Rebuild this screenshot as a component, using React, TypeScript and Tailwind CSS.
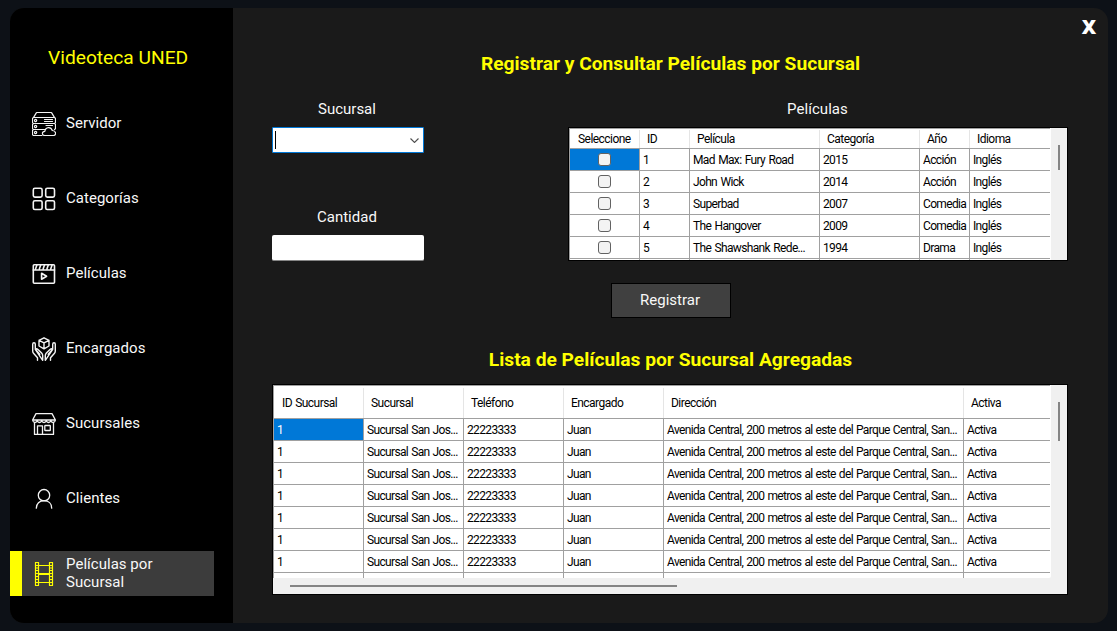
import React from "react";

const strokeProps = {
  fill: "none",
  stroke: "currentColor",
  strokeLinecap: "round" as const,
  strokeLinejoin: "round" as const,
};

function ServerIcon() {
  return (
    <svg width="24" height="24" viewBox="0 0 24 24" strokeWidth="1.2" {...strokeProps}>
      <path d="M1.6 5.4 4.3.9Q4.6.5 5.2.5H18.8Q19.4.5 19.7.9L22.4 5.4" />
      <path d="M10 23.5H2Q.5 23.5.5 22V19Q.5 17.5 2 17.5H12.5M2 17.5Q.5 17.5.5 16V13Q.5 11.5 2 11.5H22Q23.5 11.5 23.5 13V16Q23.5 17 22.5 17.5M2 11.5Q.5 11.5.5 10V7Q.5 5.5 2 5.5H22Q23.5 5.5 23.5 7V10Q23.5 11.5 22 11.5" />
      <circle cx="3.6" cy="8.5" r="1.1" />
      <circle cx="3.6" cy="14.5" r="1.1" />
      <circle cx="3.6" cy="20.5" r="1.1" />
      <path d="M12.5 7.5H20.5M12.5 9.5H20.5M14 13.5H20.5" />
      <path d="M12.8 23.5C9.5 23.5 9.7 19.5 12.8 19.3C13.5 14.7 19 14.3 20.3 18.5C24.5 18.7 24.5 23.5 21.4 23.5Z" />
    </svg>
  );
}

function GridIcon() {
  return (
    <svg width="24" height="24" viewBox="0 0 24 24" strokeWidth="1.6" {...strokeProps}>
      <rect x="1.3" y="1.3" width="8.8" height="8.8" rx="1.6" />
      <rect x="13.7" y="1.3" width="8.8" height="8.8" rx="1.6" />
      <rect x="1.3" y="13.7" width="8.8" height="8.8" rx="1.6" />
      <rect x="13.7" y="13.7" width="8.8" height="8.8" rx="1.6" />
    </svg>
  );
}

function MovieIcon() {
  return (
    <svg width="24" height="24" viewBox="0 0 24 24" strokeWidth="1.6" {...strokeProps}>
      <rect x="1.3" y="2.8" width="21.2" height="18.4" rx="1" />
      <path d="M1.3 8H22.5M4.8 3.2 3.6 6.8M8.6 3.2 7.4 6.8M12.4 3.2 11.2 6.8M16.2 3.2 15 6.8M20 3.2 18.8 6.8" />
      <path d="M9.6 11.3V17.3L14.6 14.3Z" />
    </svg>
  );
}

function HandsIcon() {
  return (
    <svg width="24" height="24" viewBox="0 0 24 24" strokeWidth="1.4" {...strokeProps}>
      <path d="M12 .8 17 3.3V9L12 11.9 7 9V3.3ZM7 3.3 12 5.9 17 3.3M12 5.9V11.9" />
      <path d="M5.5 23.3V20.7L1.5 16.2Q.7 15.3.7 14V7.2Q.7 5.7 2 5.7 3.3 5.7 3.3 7.2V12.3L7.8 17.3M3.3 12.3Q4.5 11.2 6 12.5L9.6 16Q10.7 17.2 10.7 18.8V23.3Z" />
      <path d="M18.5 23.3V20.7L22.5 16.2Q23.3 15.3 23.3 14V7.2Q23.3 5.7 22 5.7 20.7 5.7 20.7 7.2V12.3L16.2 17.3M20.7 12.3Q19.5 11.2 18 12.5L14.4 16Q13.3 17.2 13.3 18.8V23.3Z" />
    </svg>
  );
}

function StoreIcon() {
  return (
    <svg width="24" height="24" viewBox="0 0 24 24" strokeWidth="1.3" {...strokeProps}>
      <path d="M4 1.6H20L23.4 8H.6ZM.6 8Q1 10.5 2.8 10.5 4.7 10.5 5.2 8.6 5.8 10.5 7.5 10.5 9.2 10.5 9.7 8.6 10.3 10.5 12 10.5 13.7 10.5 14.3 8.6 14.8 10.5 16.5 10.5 18.2 10.5 18.8 8.6 19.3 10.5 21.2 10.5 23 10.5 23.4 8" />
      <path d="M2.5 10.5V22.4H21.5V10.5M5.5 22.4V13.8H10.5V22.4" />
      <rect x="12.8" y="13.5" width="5.5" height="5" rx=".6" />
    </svg>
  );
}

function UserIcon() {
  return (
    <svg width="24" height="24" viewBox="0 0 24 24" strokeWidth="1.3" {...strokeProps}>
      <circle cx="12" cy="8.2" r="5.7" />
      <path d="M4.3 21.2C4.3 16.5 7.5 13.7 12 13.7S19.7 16.5 19.7 21.2" />
    </svg>
  );
}

function FilmIcon() {
  return (
    <svg width="24" height="24" viewBox="0 0 24 24" strokeWidth="1.2" {...strokeProps}>
      <path d="M3.5.5H6.5V23.5H3.5ZM17.5.5H20.5V23.5H17.5Z" />
      <path d="M6.5 3.5H17.5M6.5 11.6H17.5M6.5 12.4H17.5M6.5 20.5H17.5" />
      <path
        strokeLinecap="butt"
        d="M3.5 3.5H6.5M3.5 6H6.5M3.5 8.5H6.5M3.5 11.5H6.5M3.5 14.5H6.5M3.5 17.5H6.5M3.5 20.5H6.5M17.5 3.5H20.5M17.5 6H20.5M17.5 8.5H20.5M17.5 11.5H20.5M17.5 14.5H20.5M17.5 17.5H20.5M17.5 20.5H20.5"
      />
    </svg>
  );
}

const menu = [
  { label: "Servidor", icon: <ServerIcon /> },
  { label: "Categorías", icon: <GridIcon /> },
  { label: "Películas", icon: <MovieIcon /> },
  { label: "Encargados", icon: <HandsIcon /> },
  { label: "Sucursales", icon: <StoreIcon /> },
  { label: "Clientes", icon: <UserIcon /> },
  { label: "Películas por Sucursal", icon: <FilmIcon />, active: true },
];

function Sidebar() {
  return (
    <nav className="flex w-[223px] shrink-0 flex-col bg-black">
      <h1 className="mt-[37px] h-14 pl-[38px] text-[19.2px] leading-[26px] whitespace-nowrap text-[#ffff00]">
        Videoteca UNED
      </h1>
      <ul className="flex flex-col gap-[30px]">
        {menu.map((item) => (
          <li
            key={item.label}
            className={`flex h-[45px] w-[204px] items-center border-l-12 ${
              item.active ? "border-[#ffff00] bg-[#3c3c3c] text-[#ffff00]" : "border-black text-[#f4f4f4]"
            }`}
          >
            <span className="ml-2.5">{item.icon}</span>
            <span className="ml-2.5 w-[110px] pb-0.5 text-[15px] leading-[18px] tracking-[0.03px] text-[#f8f8f8]">
              {item.label}
            </span>
          </li>
        ))}
      </ul>
    </nav>
  );
}

const movieCols = [
  { name: "Seleccione", width: "w-[70px]" },
  { name: "ID", width: "w-[50px]" },
  { name: "Película", width: "w-[130px]" },
  { name: "Categoría", width: "w-[100px]" },
  { name: "Año", width: "w-[50px]" },
  { name: "Idioma", width: "w-[80px]" },
];

const movies = [
  ["1", "Mad Max: Fury Road", "2015", "Acción", "Inglés"],
  ["2", "John Wick", "2014", "Acción", "Inglés"],
  ["3", "Superbad", "2007", "Comedia", "Inglés"],
  ["4", "The Hangover", "2009", "Comedia", "Inglés"],
  ["5", "The Shawshank Rede...", "1994", "Drama", "Inglés"],
  ["", "", "", "", ""],
];

const branchCols = [
  { name: "ID Sucursal", width: "w-[90px]" },
  { name: "Sucursal", width: "w-[100px]" },
  { name: "Teléfono", width: "w-[100px]" },
  { name: "Encargado", width: "w-[100px]" },
  { name: "Dirección", width: "w-[300px]" },
  { name: "Activa", width: "w-[86px]" },
];

const branchRow = [
  "1",
  "Sucursal San Jos...",
  "22223333",
  "Juan",
  "Avenida Central, 200 metros al este del Parque Central, San...",
  "Activa",
];
const branches = [...Array.from({ length: 7 }, () => branchRow), ["", "", "", "", "", ""]];

type Col = { name: string; width: string };

function HeaderRow({ cols, height }: { cols: Col[]; height: string }) {
  return (
    <div
      className={`mr-px flex shrink-0 border-t border-b border-t-[#a0a0a0] border-b-[#a0a0a0] leading-[19px] tracking-[-0.54px] ${height}`}
    >
      {cols.map((c, i) => (
        <div
          key={c.name}
          className={`flex shrink-0 items-center border-[#e5e5e5] ${i === 0 ? "pl-2" : "pl-[7px]"} ${c.width} ${
            i < cols.length - 1 ? "border-r" : ""
          }`}
        >
          {c.name}
        </div>
      ))}
    </div>
  );
}

function Row({ cols, cells, selected }: { cols: Col[]; cells: React.ReactNode[]; selected: boolean }) {
  return (
    <div className="mr-px flex h-[22px] shrink-0 border-b border-[#a0a0a0] leading-5">
      {cells.map((cell, i) => (
        <div
          key={i}
          className={`flex shrink-0 items-center overflow-hidden border-[#a0a0a0] pt-px pl-[3px] whitespace-nowrap ${
            cols[i].width
          } ${i < cols.length - 1 ? "border-r" : ""} ${selected && i === 0 ? "bg-[#0078d7] text-white" : ""}`}
        >
          {cell}
        </div>
      ))}
    </div>
  );
}

function MoviesTable() {
  return (
    <div className="flex h-[134px] w-[500px] border border-black bg-[#f0f0f0] text-[12px] tracking-[-0.65px] text-black [word-spacing:1px]">
      <div className="flex w-[482px] flex-col overflow-hidden border-l border-[#a0a0a0] bg-white">
        <HeaderRow cols={movieCols} height="h-[21px] pt-px" />
        {movies.map((m, i) => (
          <Row
            key={i}
            cols={movieCols}
            selected={i === 0}
            cells={[
              m[0] ? (
                <span
                  key="box"
                  className="mb-px ml-[25px] size-[13px] rounded-[3px] border border-[#626262] bg-[#f3f3f3]"
                />
              ) : null,
              ...m,
            ]}
          />
        ))}
      </div>
      <div className="flex w-4 justify-center pt-[17px]">
        <div className="h-[25px] w-0.5 bg-[#858585]" />
      </div>
    </div>
  );
}

function BranchesTable() {
  return (
    <div className="ml-[39px] flex h-[211px] w-[796px] flex-col border border-black bg-[#f0f0f0] text-[12px] tracking-[-0.65px] text-black [word-spacing:0.7px]">
      <div className="flex h-[193px]">
        <div className="flex w-[778px] flex-col overflow-hidden rounded-br-[2px] border-l border-[#a0a0a0] bg-white">
          <HeaderRow cols={branchCols} height="h-[34px] pt-0.5" />
          {branches.map((b, i) => (
            <Row key={i} cols={branchCols} selected={i === 0} cells={b} />
          ))}
        </div>
        <div className="flex w-4 justify-center pt-[17px]">
          <div className="h-[39px] w-0.5 bg-[#858585]" />
        </div>
      </div>
      <div className="flex h-4 items-center pl-[17px]">
        <div className="h-0.5 w-[387px] bg-[#858585]" />
      </div>
    </div>
  );
}

export default function App() {
  return (
    <div className="h-[631px] w-[1117px] overflow-hidden bg-[#0d1117] pt-2 pl-2.5 font-['Roboto',sans-serif]">
      <div className="flex h-[615px] w-[1098px] overflow-hidden rounded-[14px] bg-[#1a1a1a]">
        <Sidebar />
        <main className="flex w-[875px] flex-col text-[15px] text-[#f8f8f8]">
          <div className="flex h-[39px] justify-end pt-[7px] pr-2.5">
            <button className="h-6 w-[18px] font-['Noto_Sans',sans-serif] text-[20px] leading-6 font-black text-white">
              X
            </button>
          </div>
          <h2 className="h-[33px] text-center text-[19.2px] leading-[34px] font-bold text-[#ffff00]">
            Registrar y Consultar Películas por Sucursal
          </h2>
          <section className="flex h-[181px] pt-[19px]">
            <div className="ml-[39px] flex w-[152px] flex-col">
              <label className="h-7 pl-[46px] leading-5">Sucursal</label>
              <div className="flex h-[26px] items-center justify-between rounded-[1px] border border-[#0078d7] bg-white pr-1 pl-0.5">
                <span className="h-[18px] w-px bg-black" />
                <svg width="9" height="6" viewBox="0 0 9 6" fill="none" stroke="#505050" strokeWidth="1.1">
                  <path d="M.5 1.5 4.5 5.5 8.5 1.5" />
                </svg>
              </div>
              <label className="mt-[54px] h-7 pl-[45px] leading-5">Cantidad</label>
              <div className="h-[26px] rounded-[2px] border-b border-[#868686] bg-white" />
            </div>
            <div className="ml-36 flex flex-col">
              <div className="h-7 pl-[219px] leading-5 tracking-[0.06px]">Películas</div>
              <MoviesTable />
            </div>
          </section>
          <button className="mt-[22px] ml-[378px] h-[35px] w-[120px] shrink-0 border border-black bg-[#404040] pr-0.5">
            Registrar
          </button>
          <h2 className="h-[66px] shrink-0 pt-[25px] text-center text-[19.2px] leading-[34px] font-bold text-[#ffff00]">
            Lista de Películas por Sucursal Agregadas
          </h2>
          <BranchesTable />
        </main>
      </div>
    </div>
  );
}
